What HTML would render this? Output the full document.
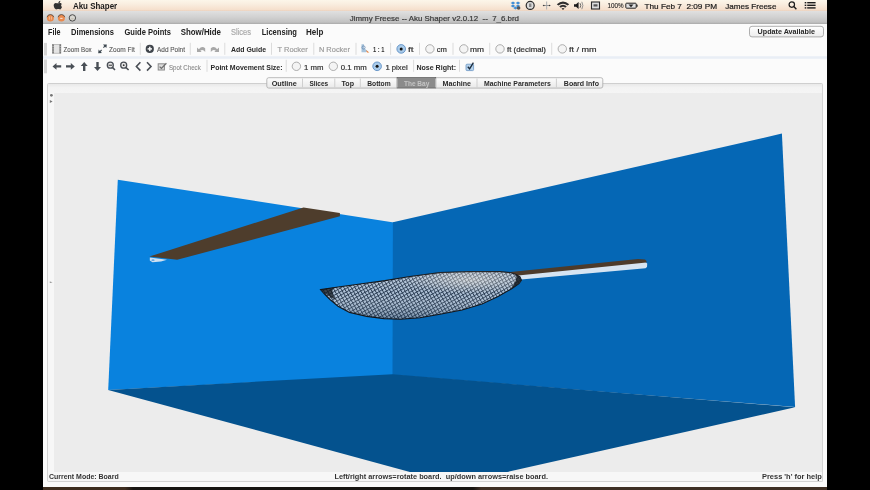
<!DOCTYPE html>
<html><head><meta charset="utf-8">
<style>
html,body{margin:0;padding:0;}
body{width:870px;height:490px;background:#000;position:relative;overflow:hidden;font-family:"Liberation Sans",sans-serif;}
.a{position:absolute;}
svg text{font-family:"Liberation Sans",sans-serif;white-space:pre;}
</style></head>
<body>
<div class="a" style="left:43px;top:0;width:784px;height:11px;background:linear-gradient(#fcf6ea 0%,#f9eddf 40%,#f5dfcc 90%,#e9d0bc 100%);"></div>
<div class="a" style="left:43px;top:11px;width:784px;height:13px;background:linear-gradient(#e0e0e0 0%,#d2d2d2 45%,#c2c2c2 85%,#a9a9a9 100%);"></div>
<div class="a" style="left:43px;top:24px;width:784px;height:463px;background:#fbfbfb;"></div>
<div class="a" style="left:43px;top:487px;width:784px;height:3px;background:linear-gradient(90deg,#3e2e20 0,#3e2e20 82px,#181512 90px,#181512 430px,#3f3025 438px,#3f3025 784px);"></div>
<div class="a" style="left:47px;top:83px;width:776px;height:399px;border:1px solid #d4d4d4;border-top-color:#cfcfcf;background:#f7f7f7;box-sizing:border-box;border-radius:2px;"></div>
<div class="a" style="left:48px;top:84px;width:774px;height:9px;background:linear-gradient(#e9e9e9,#f3f3f3 40%,#f5f5f5);"></div>
<div class="a" style="left:54px;top:93px;width:768px;height:379px;background:#ececec;"></div>
<svg class="a" style="left:0;top:0" width="870" height="490" viewBox="0 0 870 490">
  <defs>
    <clipPath id="clipf"><rect x="54" y="93" width="768" height="379"/></clipPath>
    <linearGradient id="tabg" x1="0" y1="0" x2="0" y2="1"><stop offset="0" stop-color="#fdfdfd"/><stop offset="1" stop-color="#e9e9e9"/></linearGradient>
    <linearGradient id="btng" x1="0" y1="0" x2="0" y2="1"><stop offset="0" stop-color="#ffffff"/><stop offset="1" stop-color="#ececec"/></linearGradient>
    <pattern id="mesh" patternUnits="userSpaceOnUse" width="3.2" height="3.2" patternTransform="rotate(-30)">
      <rect width="3.2" height="3.2" fill="#b0c3d8"/>
      <rect width="3.2" height="0.9" fill="#2c4058"/>
      <rect width="0.9" height="3.2" fill="#26384e"/>
    </pattern>
    <radialGradient id="meshhl" gradientUnits="userSpaceOnUse" cx="470" cy="280" r="40" gradientTransform="translate(470 280) scale(1.6 0.35) translate(-470 -280)">
      <stop offset="0" stop-color="#f4ece0" stop-opacity="0.45"/>
      <stop offset="1" stop-color="#f4ece0" stop-opacity="0"/>
    </radialGradient>
    <linearGradient id="meshshade" x1="0" y1="0" x2="0" y2="1">
      <stop offset="0" stop-color="#ffffff" stop-opacity="0.18"/>
      <stop offset="0.45" stop-color="#ffffff" stop-opacity="0"/>
      <stop offset="1" stop-color="#0a2a4a" stop-opacity="0.35"/>
    </linearGradient>
    <filter id="soft" x="-5%" y="-5%" width="110%" height="110%"><feGaussianBlur stdDeviation="0.4"/></filter>
    <filter id="soft2" x="-5%" y="-5%" width="110%" height="110%"><feGaussianBlur stdDeviation="0.3"/></filter>
  </defs>
  <!-- scene -->
  <g clip-path="url(#clipf)">
    <polygon points="117.8,179.8 393.9,222.4 393.5,375.2 108.2,389.9" fill="#0982de"/>
    <polygon points="392.9,222.2 781.9,133.6 795.1,407 392.5,375" fill="#0567b5"/>
    <polygon points="108.2,389.9 392.5,374.2 795.1,407.2 454,484" fill="#04528e"/>
    <!-- left board -->
    <polygon points="149.8,257.6 167,259.8 161,261.6 152.5,262.2 149.8,260.6" fill="#cfe0f0"/><ellipse cx="153" cy="260.2" rx="1.6" ry="0.9" fill="#6aa8e0"/>
    <polygon points="149.3,256.6 303.5,207.4 339.9,213.1 339.9,216.2 177.2,259.8" fill="#4e3d2c"/>
    <!-- stick -->
    <polygon points="516,274.5 645,261.8 647.2,263.5 647,267 645.5,268.3 521,279.4" fill="#d6e4f2"/>
    <polygon points="507,272.3 638,258.9 645,259.6 646.7,261.2 646.3,262.6 518,275.4 510,275" fill="#4d3b2b"/>
    <!-- mesh board -->
    <path d="M320.6,289.6 L340,286.8 L360,284 L385,280.6 L410,276.5 L440,272.6 L470,271.6 L500,271.6 L510,272.6 L516,274.5 L520,277 L521.4,280.2 L519,283.5 L512,288.5 L498,296.5 L482,304 L462,310 L440,314.2 L420,317.8 L400,319.2 L384,318.6 L366.7,316.4 L349.5,312.4 L338,306.2 L330,299.5 L325,294.5 Z" fill="url(#mesh)"/>
    <path d="M320.6,289.6 L340,286.8 L360,284 L385,280.6 L410,276.5 L440,272.6 L470,271.6 L500,271.6 L510,272.6 L516,274.5 L520,277 L521.4,280.2 L519,283.5 L512,288.5 L498,296.5 L482,304 L462,310 L440,314.2 L420,317.8 L400,319.2 L384,318.6 L366.7,316.4 L349.5,312.4 L338,306.2 L330,299.5 L325,294.5 Z" fill="url(#meshshade)" stroke="#12171d" stroke-width="1.1"/>
    <path d="M320.6,289.6 L340,286.8 L360,284 L385,280.6 L410,276.5 L440,272.6 L470,271.6 L500,271.6 L510,272.6 L516,274.5 L520,277 L521.4,280.2 L519,283.5 L512,288.5 L498,296.5 L482,304 L462,310 L440,314.2 L420,317.8 L400,319.2 L384,318.6 L366.7,316.4 L349.5,312.4 L338,306.2 L330,299.5 L325,294.5 Z" fill="url(#meshhl)"/>
    <path d="M320.6,289.6 L334,287.6 Q330,292 336,300 Q327,296 320.6,289.6 Z" fill="#12171d" opacity="0.75"/>
    <path d="M521.4,280.2 L519,276.5 L516,274.5 Q518,281 510,289.4 Q518,285 521.4,280.2 Z" fill="#12171d" opacity="0.85"/>
  </g>
  <!-- traffic lights -->
  <circle cx="50.4" cy="17.9" r="3.5" fill="#ea8a4e"/>
  <path d="M47,17.2 A3.5,3.5 0 0 1 53.8,17.2" fill="none" stroke="#3a3a3a" stroke-width="0.9" opacity="0.8"/>
  <path d="M49.4,16.4 L49.4,19.6 M51.4,16.4 L51.4,19.6" stroke="#f4c8a8" stroke-width="0.8"/>
  <circle cx="61.4" cy="17.9" r="3.5" fill="#ea8a4e"/>
  <path d="M58,17.2 A3.5,3.5 0 0 1 64.8,17.2" fill="none" stroke="#3a3a3a" stroke-width="0.9" opacity="0.8"/>
  <rect x="60.2" y="17.8" width="2.4" height="1.2" fill="#f8dcc8"/>
  <circle cx="72.4" cy="17.9" r="3.2" fill="#d8d6d0" stroke="#4a4a4a" stroke-width="1"/>
  <rect x="71.2" y="18" width="2.4" height="1.6" fill="#c8c4b8"/>
  <!-- update button -->
  <rect x="749.5" y="26.3" width="74" height="10.6" rx="2.5" fill="url(#btng)" stroke="#9c9c9c" stroke-width="0.8"/>
  <!-- row separator band -->
  <rect x="43" y="56.2" width="784" height="2.6" fill="#e9eef5"/>
  <!-- grips -->
  <rect x="44" y="42.9" width="3" height="12.6" fill="#d4d4d4"/>
  <rect x="44" y="59.5" width="3" height="13.8" fill="#d4d4d4"/>
  <rect x="139.8" y="42.8" width="1" height="12" fill="#dcdcdc"/><rect x="189.8" y="42.8" width="1" height="12" fill="#dcdcdc"/><rect x="224.3" y="42.8" width="1" height="12" fill="#dcdcdc"/><rect x="271.0" y="42.8" width="1" height="12" fill="#dcdcdc"/><rect x="313.3" y="42.8" width="1" height="12" fill="#dcdcdc"/><rect x="355.5" y="42.8" width="1" height="12" fill="#dcdcdc"/><rect x="390.1" y="42.8" width="1" height="12" fill="#dcdcdc"/><rect x="419.0" y="42.8" width="1" height="12" fill="#dcdcdc"/><rect x="452.5" y="42.8" width="1" height="12" fill="#dcdcdc"/><rect x="489.2" y="42.8" width="1" height="12" fill="#dcdcdc"/><rect x="551.2" y="42.8" width="1" height="12" fill="#dcdcdc"/><rect x="206.5" y="59.8" width="1" height="12" fill="#dcdcdc"/><rect x="285.7" y="59.8" width="1" height="12" fill="#dcdcdc"/><rect x="413.1" y="59.8" width="1" height="12" fill="#dcdcdc"/><rect x="459.0" y="59.8" width="1" height="12" fill="#dcdcdc"/>
  <circle cx="401.2" cy="48.9" r="4.3" fill="#a9cbea" stroke="#5d8fc4" stroke-width="0.9"/><circle cx="401.2" cy="48.9" r="1.5" fill="#111"/><circle cx="429.9" cy="48.9" r="4.2" fill="#f4f4f4" stroke="#9a9a9a" stroke-width="0.8"/><circle cx="463.8" cy="48.9" r="4.2" fill="#f4f4f4" stroke="#9a9a9a" stroke-width="0.8"/><circle cx="500" cy="48.9" r="4.2" fill="#f4f4f4" stroke="#9a9a9a" stroke-width="0.8"/><circle cx="562.3" cy="48.9" r="4.2" fill="#f4f4f4" stroke="#9a9a9a" stroke-width="0.8"/><circle cx="296.4" cy="66.3" r="4.2" fill="#f4f4f4" stroke="#9a9a9a" stroke-width="0.8"/><circle cx="333.3" cy="66.3" r="4.2" fill="#f4f4f4" stroke="#9a9a9a" stroke-width="0.8"/><circle cx="377.1" cy="66.3" r="4.3" fill="#a9cbea" stroke="#5d8fc4" stroke-width="0.9"/><circle cx="377.1" cy="66.3" r="1.5" fill="#111"/>
  <!-- tabs -->
  <rect x="266.8" y="77.7" width="336" height="10.4" rx="2" fill="url(#tabg)" stroke="#a9a9a9" stroke-width="0.8"/>
  <rect x="397" y="77.4" width="38.8" height="10.6" fill="#8b8b8b" stroke="#5e5e5e" stroke-width="0.6"/>
  <rect x="302.0" y="78.5" width="1" height="9" fill="#cfcfcf"/><rect x="334.3" y="78.5" width="1" height="9" fill="#cfcfcf"/><rect x="359.8" y="78.5" width="1" height="9" fill="#cfcfcf"/><rect x="396.5" y="78.5" width="1" height="9" fill="#cfcfcf"/><rect x="435.3" y="78.5" width="1" height="9" fill="#cfcfcf"/><rect x="476.5" y="78.5" width="1" height="9" fill="#cfcfcf"/><rect x="555.9" y="78.5" width="1" height="9" fill="#cfcfcf"/>
  <g filter="url(#soft2)">
  <!-- apple logo -->
  <path d="M58.3,2.2 C58.9,1.4 59.6,0.9 60.3,0.8 C60.4,1.6 60.0,2.4 59.4,2.9 C58.9,3.3 58.5,3.3 58.3,2.2 Z" fill="#333"/>
  <path d="M57.8,3.3 C58.6,3.3 59.0,2.9 59.9,2.9 C60.8,2.9 61.5,3.4 61.9,4.1 C60.9,4.7 60.8,6.4 62.0,7.0 C61.6,8.1 60.9,9.4 60.0,9.5 C59.3,9.5 59.0,9.1 58.1,9.1 C57.2,9.1 56.9,9.5 56.2,9.5 C55.2,9.5 53.8,7.6 53.7,5.6 C53.6,3.9 54.7,3.0 55.8,3.0 C56.7,3.0 57.1,3.3 57.8,3.3 Z" fill="#333"/>
  <!-- dropbox -->
  <g fill="#3f8ed6">
    <polygon points="513,1.6 515.3,3.1 513,4.6 510.7,3.1"/>
    <polygon points="518,1.6 520.3,3.1 518,4.6 515.7,3.1"/>
    <polygon points="513,4.6 515.3,6.1 513,7.6 510.7,6.1"/>
    <polygon points="518,4.6 520.3,6.1 518,7.6 515.7,6.1"/>
    <polygon points="515.5,6.6 517.8,8.1 515.5,9.6 513.2,8.1"/>
  </g>
  <circle cx="518.6" cy="8" r="1.8" fill="#555"/>
  <!-- time machine -->
  <circle cx="530.2" cy="5.4" r="4" fill="#dcdcdc" stroke="#2a2a2a" stroke-width="1.2"/>
  <rect x="529" y="3.5" width="2.4" height="3.5" fill="#888"/>
  <!-- bluetooth-ish -->
  <rect x="546" y="1.5" width="1.2" height="8" fill="#b8b8b8"/>
  <rect x="542.8" y="5" width="7.7" height="1" fill="#999"/>
  <circle cx="543.8" cy="5.5" r="0.7" fill="#333"/><circle cx="549.5" cy="5.5" r="0.7" fill="#333"/>
  <!-- wifi -->
  <path d="M556.8,4.2 Q563,-1.2 569.2,4.2 L567.6,5.6 Q563,1.7 558.4,5.6 Z" fill="#2e2e2e"/>
  <path d="M559.2,6.3 Q563,3.2 566.8,6.3 L565.2,7.7 Q563,5.9 560.8,7.7 Z" fill="#2e2e2e"/>
  <path d="M561.5,8.5 Q563,7.3 564.5,8.5 L563,10 Z" fill="#2e2e2e"/>
  <!-- volume -->
  <polygon points="574,4.3 576,4.3 578.6,2 578.6,9 576,6.8 574,6.8" fill="#1e1e1e"/>
  <path d="M580,3.2 Q581.5,5.5 580,7.8" stroke="#555" stroke-width="0.9" fill="none"/>
  <path d="M581.8,1.8 Q584,5.5 581.8,9.2" stroke="#888" stroke-width="0.9" fill="none"/>
  <!-- display -->
  <rect x="591.5" y="2" width="8" height="7" fill="#ddd" stroke="#2a2a2a" stroke-width="1.1"/>
  <rect x="593.5" y="4.3" width="4" height="2.2" fill="#555"/>
  <!-- battery -->
  <rect x="625.8" y="3.2" width="10.4" height="5" rx="0.8" fill="#e0e0e0" stroke="#222" stroke-width="1"/>
  <rect x="636.4" y="4.6" width="1.2" height="2.2" fill="#222"/>
  <polygon points="628.5,4.6 633.5,4.6 631,7.2" fill="#222"/>
  <!-- search -->
  <circle cx="791.8" cy="4.6" r="2.7" fill="none" stroke="#1e1e1e" stroke-width="1.2"/>
  <line x1="793.8" y1="6.6" x2="796.4" y2="9.2" stroke="#1e1e1e" stroke-width="1.4"/>
  <!-- list -->
  <g fill="#1e1e1e">
    <rect x="804.7" y="2" width="1.6" height="1.4"/><rect x="807.2" y="2" width="8.4" height="1.4"/>
    <rect x="804.7" y="4.6" width="1.6" height="1.4"/><rect x="807.2" y="4.6" width="8.4" height="1.4"/>
    <rect x="804.7" y="7.2" width="1.6" height="1.4"/><rect x="807.2" y="7.2" width="8.4" height="1.4"/>
  </g>
  <!-- zoom box icon -->
  <rect x="52.5" y="44.6" width="8.4" height="8.6" fill="#e4e4e4" stroke="#9a9a9a" stroke-width="0.6"/>
  <rect x="52.3" y="44.4" width="1.6" height="9" fill="#777"/>
  <rect x="59.4" y="44.4" width="1.6" height="9" fill="#777"/>
  <g fill="#ccc"><rect x="52.3" y="46.4" width="1.6" height="0.6"/><rect x="52.3" y="48.6" width="1.6" height="0.6"/><rect x="52.3" y="50.8" width="1.6" height="0.6"/>
  <rect x="59.4" y="46.4" width="1.6" height="0.6"/><rect x="59.4" y="48.6" width="1.6" height="0.6"/><rect x="59.4" y="50.8" width="1.6" height="0.6"/></g>
  <!-- zoom fit icon -->
  <polygon points="98.2,53.2 98.6,49.6 99.9,50.9 101.2,49.6 102,50.4 100.7,51.7 102,53 " fill="#3c4650"/>
  <polygon points="106.8,44.4 106.4,48 105.1,46.7 103.8,48 103,47.2 104.3,45.9 103,44.6" fill="#3c4650"/>
  <!-- add point -->
  <circle cx="149.8" cy="48.9" r="4.1" fill="#3f454c"/>
  <rect x="147.6" y="48.2" width="4.4" height="1.4" fill="#fff"/>
  <rect x="149.1" y="46.7" width="1.4" height="4.4" fill="#fff"/>
  <!-- undo / redo -->
  <path d="M197,52 L197,47.6 L198.9,49.2 Q201.6,45.6 205.2,48.2 L205.2,52 Q203,48.8 200.3,50.6 L201.6,52 Z" fill="#a8a8a8"/>
  <path d="M219,52 L219,47.6 L217.1,49.2 Q214.4,45.6 210.8,48.2 L210.8,52 Q213,48.8 215.7,50.6 L214.4,52 Z" fill="#a8a8a8"/>
  <!-- scale icon -->
  <path d="M361.5,52.2 L361.5,44.3 L364,44.3 L364,48 L367.5,51 L366,52.2 Z" fill="#a8c4dc"/>
  <circle cx="363.5" cy="47.5" r="1.6" fill="none" stroke="#6a8ab0" stroke-width="0.8"/>
  <polygon points="366,50 369.4,52.4 367,52.6" fill="#e8803a"/>
  <!-- arrows row2 -->
  <g fill="#4a4f56">
    <polygon points="52.5,66.4 56.5,63.1 56.5,65.3 61.2,65.3 61.2,67.6 56.5,67.6 56.5,69.8"/>
    <polygon points="74.8,66.4 70.8,63.1 70.8,65.3 66,65.3 66,67.6 70.8,67.6 70.8,69.8"/>
    <polygon points="84.2,62 87.7,66 85.4,66 85.4,70.9 83,70.9 83,66 80.7,66"/>
    <polygon points="97.5,70.9 101,66.9 98.7,66.9 98.7,62 96.3,62 96.3,66.9 94,66.9"/>
  </g>
  <!-- zoom icons -->
  <circle cx="110.3" cy="65.2" r="3" fill="#e8e8e8" stroke="#4a4f56" stroke-width="1.3"/>
  <rect x="108.6" y="64.7" width="3.4" height="1" fill="#333"/>
  <line x1="112.4" y1="67.4" x2="115" y2="70" stroke="#4a4f56" stroke-width="1.5"/>
  <circle cx="123.7" cy="65.2" r="3" fill="#e8e8e8" stroke="#4a4f56" stroke-width="1.3"/>
  <circle cx="123.7" cy="65.2" r="0.9" fill="#333"/>
  <line x1="125.8" y1="67.4" x2="128.6" y2="70" stroke="#4a4f56" stroke-width="1.5"/>
  <!-- chevrons -->
  <polyline points="140.4,62.3 136.4,66.5 140.4,70.6" fill="none" stroke="#4a4f56" stroke-width="1.6"/>
  <polyline points="147,62.3 151,66.5 147,70.6" fill="none" stroke="#4a4f56" stroke-width="1.6"/>
  <!-- spot check -->
  <rect x="158.2" y="63.8" width="6.2" height="6.2" fill="#dcdcdc" stroke="#8a8a8a" stroke-width="1"/>
  <polyline points="159.6,66.6 161.4,68.4 166.4,63.2" fill="none" stroke="#6e6e6e" stroke-width="1.3"/>
  <!-- checkbox -->
  <rect x="466" y="64.2" width="7.6" height="6.4" rx="1" fill="#b5d2ec" stroke="#6a96c4" stroke-width="0.8"/>
  <polyline points="467.8,66.8 469.6,68.8 473.4,62.6" fill="none" stroke="#1a2a3a" stroke-width="1.3"/>
  <!-- frame left marks -->
  <circle cx="51.4" cy="95.3" r="1.4" fill="#777"/>
  <polygon points="49.8,100 52.6,101.5 49.8,103" fill="#777"/>
  <polygon points="49.8,281.6 52.6,282.3 49.8,283" fill="#8a8a8a"/>
</g>
  <g filter="url(#soft)"><text x="72.9" y="9.0" textLength="44.3" lengthAdjust="spacingAndGlyphs" font-size="8.4" font-weight="bold" fill="#1a1a1a">Aku Shaper</text>
<text x="607.5" y="8.4" textLength="16.1" lengthAdjust="spacingAndGlyphs" font-size="6.6" font-weight="normal" fill="#222" stroke="#222" stroke-width="0.1">100%</text>
<text x="644.5" y="8.9" textLength="72.5" lengthAdjust="spacingAndGlyphs" font-size="8.0" font-weight="normal" fill="#1a1a1a" stroke="#1a1a1a" stroke-width="0.2">Thu Feb 7  2:09 PM</text>
<text x="725.3" y="8.9" textLength="51.1" lengthAdjust="spacingAndGlyphs" font-size="8.0" font-weight="normal" fill="#1a1a1a" stroke="#1a1a1a" stroke-width="0.2">James Freese</text>
<text x="349.8" y="20.9" textLength="169.2" lengthAdjust="spacingAndGlyphs" font-size="7.3" font-weight="normal" fill="#3a3a3a" stroke="#3a3a3a" stroke-width="0.2">Jimmy Freese -- Aku Shaper v2.0.12  --  7_6.brd</text>
<text x="48.1" y="35" textLength="12.4" lengthAdjust="spacingAndGlyphs" font-size="8.3" font-weight="bold" fill="#222">File</text>
<text x="71.1" y="35" textLength="42.8" lengthAdjust="spacingAndGlyphs" font-size="8.3" font-weight="bold" fill="#222">Dimensions</text>
<text x="124.5" y="35" textLength="46.5" lengthAdjust="spacingAndGlyphs" font-size="8.3" font-weight="bold" fill="#222">Guide Points</text>
<text x="180.7" y="35" textLength="40.3" lengthAdjust="spacingAndGlyphs" font-size="8.3" font-weight="bold" fill="#222">Show/Hide</text>
<text x="231" y="35" textLength="20.0" lengthAdjust="spacingAndGlyphs" font-size="8.3" font-weight="normal" fill="#aaa" stroke="#aaa" stroke-width="0.2">Slices</text>
<text x="261.7" y="35" textLength="35.3" lengthAdjust="spacingAndGlyphs" font-size="8.3" font-weight="bold" fill="#222">Licensing</text>
<text x="306" y="35" textLength="17.4" lengthAdjust="spacingAndGlyphs" font-size="8.3" font-weight="bold" fill="#222">Help</text>
<text x="757.6" y="34.1" textLength="57.4" lengthAdjust="spacingAndGlyphs" font-size="7.2" font-weight="bold" fill="#2a2a2a">Update Available</text>
<text x="63.5" y="51.7" textLength="28.2" lengthAdjust="spacingAndGlyphs" font-size="6.7" font-weight="normal" fill="#555" stroke="#555" stroke-width="0.1">Zoom Box</text>
<text x="109" y="51.7" textLength="25.8" lengthAdjust="spacingAndGlyphs" font-size="6.7" font-weight="normal" fill="#555" stroke="#555" stroke-width="0.1">Zoom Fit</text>
<text x="157" y="51.7" textLength="28.0" lengthAdjust="spacingAndGlyphs" font-size="6.7" font-weight="normal" fill="#555" stroke="#555" stroke-width="0.1">Add Point</text>
<text x="231" y="52.0" textLength="35.0" lengthAdjust="spacingAndGlyphs" font-size="7.8" font-weight="bold" fill="#2a2a2a">Add Guide</text>
<text x="277.5" y="52.0" textLength="30.3" lengthAdjust="spacingAndGlyphs" font-size="7.6" font-weight="normal" fill="#9c9c9c" stroke="#9c9c9c" stroke-width="0.2">T Rocker</text>
<text x="318.9" y="52.0" textLength="31.1" lengthAdjust="spacingAndGlyphs" font-size="7.6" font-weight="normal" fill="#9c9c9c" stroke="#9c9c9c" stroke-width="0.2">N Rocker</text>
<text x="373" y="51.7" textLength="11.5" lengthAdjust="spacingAndGlyphs" font-size="7.2" font-weight="bold" fill="#333">1 : 1</text>
<text x="408" y="51.7" textLength="5.6" lengthAdjust="spacingAndGlyphs" font-size="7.4" font-weight="normal" fill="#333" stroke="#333" stroke-width="0.2">ft</text>
<text x="436.8" y="51.7" textLength="10.2" lengthAdjust="spacingAndGlyphs" font-size="7.4" font-weight="normal" fill="#333" stroke="#333" stroke-width="0.2">cm</text>
<text x="470" y="51.7" textLength="14.0" lengthAdjust="spacingAndGlyphs" font-size="7.4" font-weight="normal" fill="#333" stroke="#333" stroke-width="0.2">mm</text>
<text x="507" y="51.7" textLength="39.0" lengthAdjust="spacingAndGlyphs" font-size="7.4" font-weight="normal" fill="#333" stroke="#333" stroke-width="0.2">ft (decimal)</text>
<text x="569" y="51.7" textLength="27.6" lengthAdjust="spacingAndGlyphs" font-size="7.4" font-weight="normal" fill="#333" stroke="#333" stroke-width="0.2">ft / mm</text>
<text x="169" y="69.7" textLength="31.7" lengthAdjust="spacingAndGlyphs" font-size="6.7" font-weight="normal" fill="#888" stroke="#888" stroke-width="0.1">Spot Check</text>
<text x="210.5" y="69.7" textLength="72.0" lengthAdjust="spacingAndGlyphs" font-size="7.7" font-weight="bold" fill="#2a2a2a">Point Movement Size:</text>
<text x="304" y="69.7" textLength="19.4" lengthAdjust="spacingAndGlyphs" font-size="7.4" font-weight="normal" fill="#333" stroke="#333" stroke-width="0.2">1 mm</text>
<text x="340.7" y="69.7" textLength="26.0" lengthAdjust="spacingAndGlyphs" font-size="7.4" font-weight="normal" fill="#333" stroke="#333" stroke-width="0.2">0.1 mm</text>
<text x="385.4" y="69.7" textLength="22.3" lengthAdjust="spacingAndGlyphs" font-size="7.4" font-weight="normal" fill="#333" stroke="#333" stroke-width="0.2">1 pixel</text>
<text x="416.4" y="69.7" textLength="39.6" lengthAdjust="spacingAndGlyphs" font-size="7.7" font-weight="bold" fill="#2a2a2a">Nose Right:</text>
<text x="271.7" y="85.5" textLength="25.1" lengthAdjust="spacingAndGlyphs" font-size="7.2" font-weight="bold" fill="#2a2a2a">Outline</text>
<text x="309.4" y="85.5" textLength="18.8" lengthAdjust="spacingAndGlyphs" font-size="7.2" font-weight="bold" fill="#2a2a2a">Slices</text>
<text x="341.5" y="85.5" textLength="12.5" lengthAdjust="spacingAndGlyphs" font-size="7.2" font-weight="bold" fill="#2a2a2a">Top</text>
<text x="367.2" y="85.5" textLength="23.5" lengthAdjust="spacingAndGlyphs" font-size="7.2" font-weight="bold" fill="#2a2a2a">Bottom</text>
<text x="404" y="85.5" textLength="25.3" lengthAdjust="spacingAndGlyphs" font-size="7.2" font-weight="bold" fill="#c4c4c4">The Bay</text>
<text x="442.6" y="85.5" textLength="28.4" lengthAdjust="spacingAndGlyphs" font-size="7.2" font-weight="bold" fill="#2a2a2a">Machine</text>
<text x="484" y="85.5" textLength="66.7" lengthAdjust="spacingAndGlyphs" font-size="7.2" font-weight="bold" fill="#2a2a2a">Machine Parameters</text>
<text x="563.8" y="85.5" textLength="35.2" lengthAdjust="spacingAndGlyphs" font-size="7.2" font-weight="bold" fill="#2a2a2a">Board Info</text>
<text x="49" y="478.9" textLength="69.7" lengthAdjust="spacingAndGlyphs" font-size="6.7" font-weight="bold" fill="#333">Current Mode: Board</text>
<text x="334.4" y="478.9" textLength="213.6" lengthAdjust="spacingAndGlyphs" font-size="6.7" font-weight="bold" fill="#333">Left/right arrows=rotate board.  up/down arrows=raise board.</text>
<text x="762" y="478.9" textLength="59.8" lengthAdjust="spacingAndGlyphs" font-size="6.7" font-weight="bold" fill="#333">Press &#39;h&#39; for help</text></g>
</svg>
</body></html>
